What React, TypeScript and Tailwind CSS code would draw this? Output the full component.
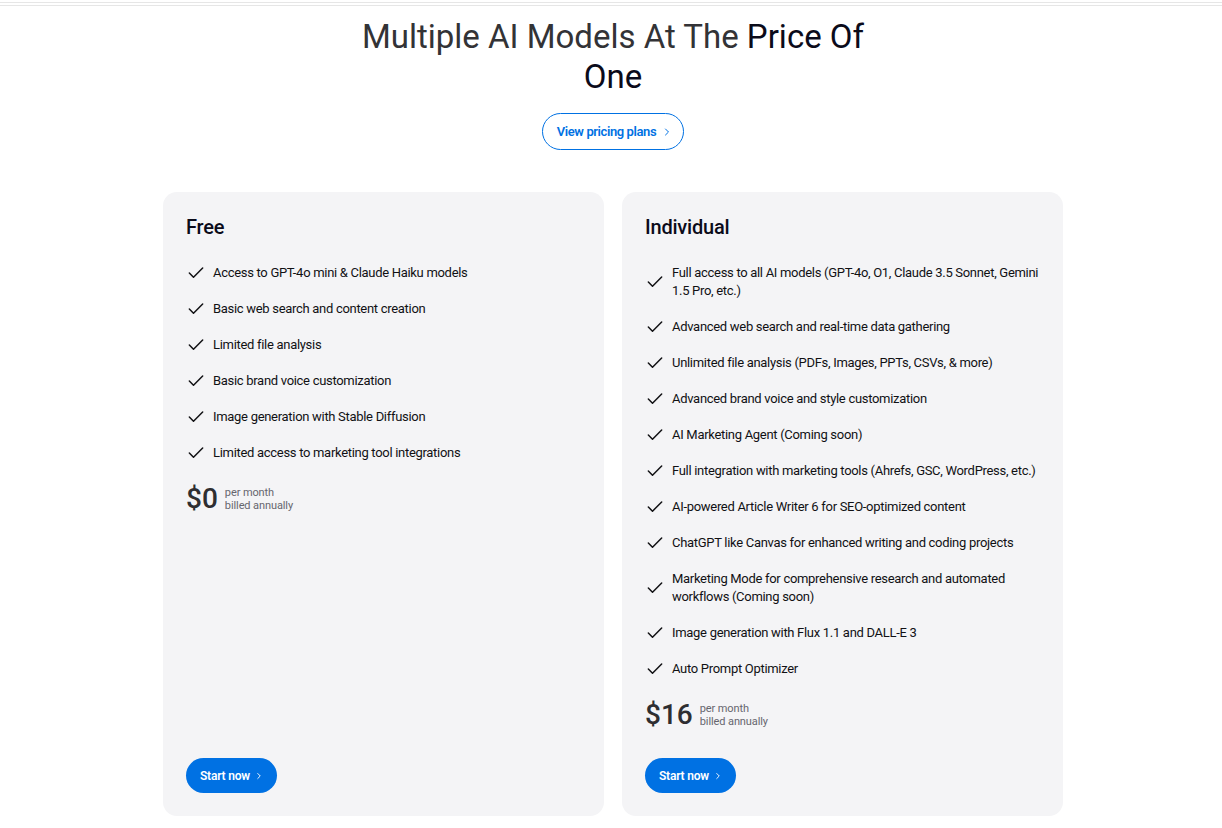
import { Check, ChevronRight } from 'lucide-react';

type Plan = {
  name: string;
  price: string;
  features: string[];
};

const plans: Plan[] = [
  {
    name: 'Free',
    price: '$0',
    features: [
      'Access to GPT-4o mini & Claude Haiku models',
      'Basic web search and content creation',
      'Limited file analysis',
      'Basic brand voice customization',
      'Image generation with Stable Diffusion',
      'Limited access to marketing tool integrations',
    ],
  },
  {
    name: 'Individual',
    price: '$16',
    features: [
      'Full access to all AI models (GPT-4o, O1, Claude 3.5 Sonnet, Gemini 1.5 Pro, etc.)',
      'Advanced web search and real-time data gathering',
      'Unlimited file analysis (PDFs, Images, PPTs, CSVs, & more)',
      'Advanced brand voice and style customization',
      'AI Marketing Agent (Coming soon)',
      'Full integration with marketing tools (Ahrefs, GSC, WordPress, etc.)',
      'AI-powered Article Writer 6 for SEO-optimized content',
      'ChatGPT like Canvas for enhanced writing and coding projects',
      'Marketing Mode for comprehensive research and automated workflows (Coming soon)',
      'Image generation with Flux 1.1 and DALL-E 3',
      'Auto Prompt Optimizer',
    ],
  },
];

const PlanCard: React.FC<{ plan: Plan }> = ({ plan }) => {
  return (
    <div className="flex flex-col rounded-[14px] bg-[#f4f4f6] px-[23px] pt-[21px] pb-[23px]">
      <h3 className="text-[20px] leading-[28px] font-medium tracking-[-0.2px] text-[#0b0b1a]">{plan.name}</h3>

      <ul className="mt-[23px] flex flex-col gap-[18px]">
        {plan.features.map((f) => (
          <li key={f} className="flex items-center gap-[7px]">
            <Check className="-my-[1px] h-[20px] w-[20px] shrink-0 text-[#111114]" strokeWidth={1.8} />
            <span className="text-[13px] leading-[18px] tracking-[-0.3px] text-[#111114]">{f}</span>
          </li>
        ))}
      </ul>

      <div className="mt-[21px] flex items-center gap-[7px]">
        <span className="text-[28px] leading-[32px] font-medium text-[#2e2e31]">{plan.price}</span>
        <div className="flex flex-col text-[11px] leading-[13px] tracking-[-0.1px] text-[#66666e]">
          <span>per month</span>
          <span>billed annually</span>
        </div>
      </div>

      <div className="mt-auto pt-[27px]">
        <button className="flex h-[35px] items-center gap-[4px] rounded-full bg-[#0071e3] pl-[14px] pr-[13px] text-[12px] font-semibold tracking-[-0.2px] text-white">
          Start now
          <ChevronRight className="h-[10px] w-[10px]" strokeWidth={2.2} />
        </button>
      </div>
    </div>
  );
};

export default function App() {
  return (
    <div className="min-h-screen bg-white font-['Roboto','Liberation_Sans',sans-serif]">
      <div className="h-[2px]" />
      <div className="h-[4px] border-y border-[#e6e6e6]" />

      <div className="flex flex-col items-center pl-1 pt-[11px]">
        <h1 className="max-w-[530px] text-center text-[33px] leading-[40px] text-[#333336]">
          Multiple AI Models At The <span className="text-[#0b0b1a]">Price Of One</span>
        </h1>

        <button className="mt-[16px] flex h-[37px] items-center gap-[5px] rounded-full border border-[#0071e3] pl-[14px] pr-[10px] text-[13px] font-semibold tracking-[-0.4px] text-[#0071e3]">
          View pricing plans
          <ChevronRight className="h-[12px] w-[12px]" strokeWidth={2} />
        </button>

        <div className="mt-[42px] grid w-[900px] grid-cols-2 gap-[18px]">
          {plans.map((p) => (
            <PlanCard key={p.name} plan={p} />
          ))}
        </div>
      </div>
    </div>
  );
}
